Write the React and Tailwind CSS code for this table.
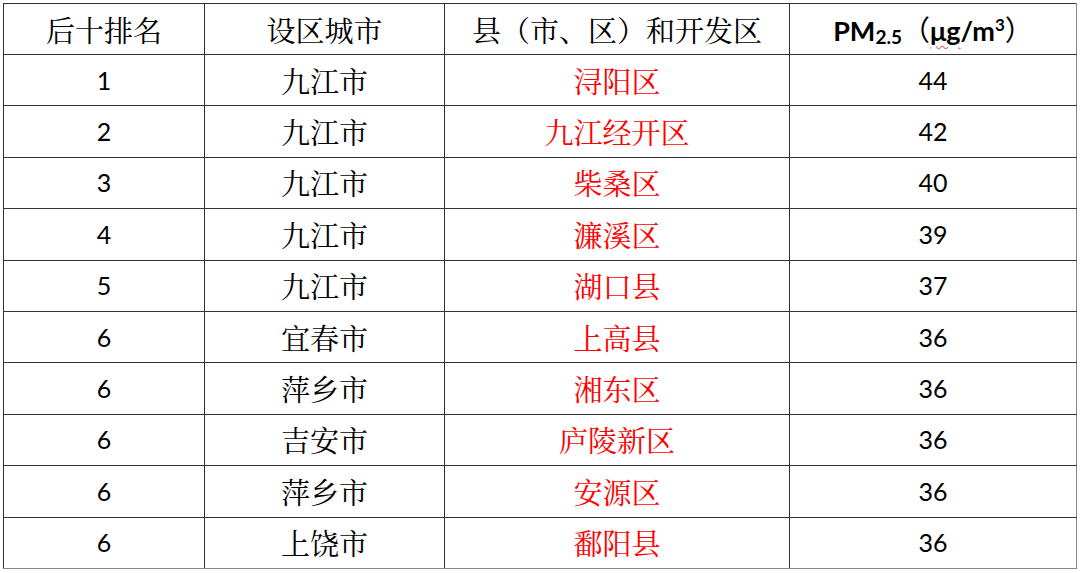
import React from 'react';

const rows = [
  ['1', '九江市', '浔阳区', '44'],
  ['2', '九江市', '九江经开区', '42'],
  ['3', '九江市', '柴桑区', '40'],
  ['4', '九江市', '濂溪区', '39'],
  ['5', '九江市', '湖口县', '37'],
  ['6', '宜春市', '上高县', '36'],
  ['6', '萍乡市', '湘东区', '36'],
  ['6', '吉安市', '庐陵新区', '36'],
  ['6', '萍乡市', '安源区', '36'],
  ['6', '上饶市', '鄱阳县', '36'],
];

// shared cell styles
const cell = 'border border-[#333] text-center p-0 leading-none';
const cjk = "font-['Noto_Serif_CJK_SC','Noto_Sans_CJK_SC',serif] text-[29px]";
const num = "font-['Lato','Open_Sans',sans-serif] text-[25px]";

export default function App() {
  return (
    <div className="w-[1080px] h-[573px] bg-white pt-[3px] pl-[3px]">
      <table className="table-fixed border-collapse w-[1073px] text-black">
        <colgroup>
          <col className="w-[201px]" />
          <col className="w-[240px]" />
          <col className="w-[345px]" />
          <col className="w-[287px]" />
        </colgroup>
        <thead>
          <tr className="h-[51px]">
            <th className={`${cell} ${cjk} font-normal`}>后十排名</th>
            <th className={`${cell} ${cjk} font-normal`}>设区城市</th>
            <th className={`${cell} ${cjk} font-normal`}>县（市、区）和开发区</th>
            <th className={`${cell} border-r-[#888] font-normal font-['Lato','Open_Sans',sans-serif]`}>
              <span className="font-bold text-[27px]">PM</span>
              <span className="font-bold text-[19px] relative top-[3px]">2.5</span>
              <span className="text-[28px] font-['Noto_Sans_CJK_SC',sans-serif]">（</span>
              <span className="font-bold text-[27px] underline decoration-wavy decoration-red-500 decoration-1 underline-offset-4">μg</span>
              <span className="font-bold text-[27px]">/m</span>
              <span className="font-bold text-[17px] relative -top-[10px]">3</span>
              <span className="text-[28px] font-['Noto_Sans_CJK_SC',sans-serif]">）</span>
            </th>
          </tr>
        </thead>
        <tbody>
          {rows.map((r, i) => {
            const last = i === rows.length - 1;
            return (
              <tr key={i} className="h-[51.4px]">
                <td className={`${cell} ${num} ${last ? 'border-b-[#888]' : ''}`}>{r[0]}</td>
                <td className={`${cell} ${cjk} ${last ? 'border-b-[#888]' : ''}`}>{r[1]}</td>
                <td className={`${cell} ${cjk} text-[#ff0000] ${last ? 'border-b-[#888]' : ''}`}>{r[2]}</td>
                <td className={`${cell} ${num} border-r-[#888] ${last ? 'border-b-[#888]' : ''}`}>{r[3]}</td>
              </tr>
            );
          })}
        </tbody>
      </table>
    </div>
  );
}
